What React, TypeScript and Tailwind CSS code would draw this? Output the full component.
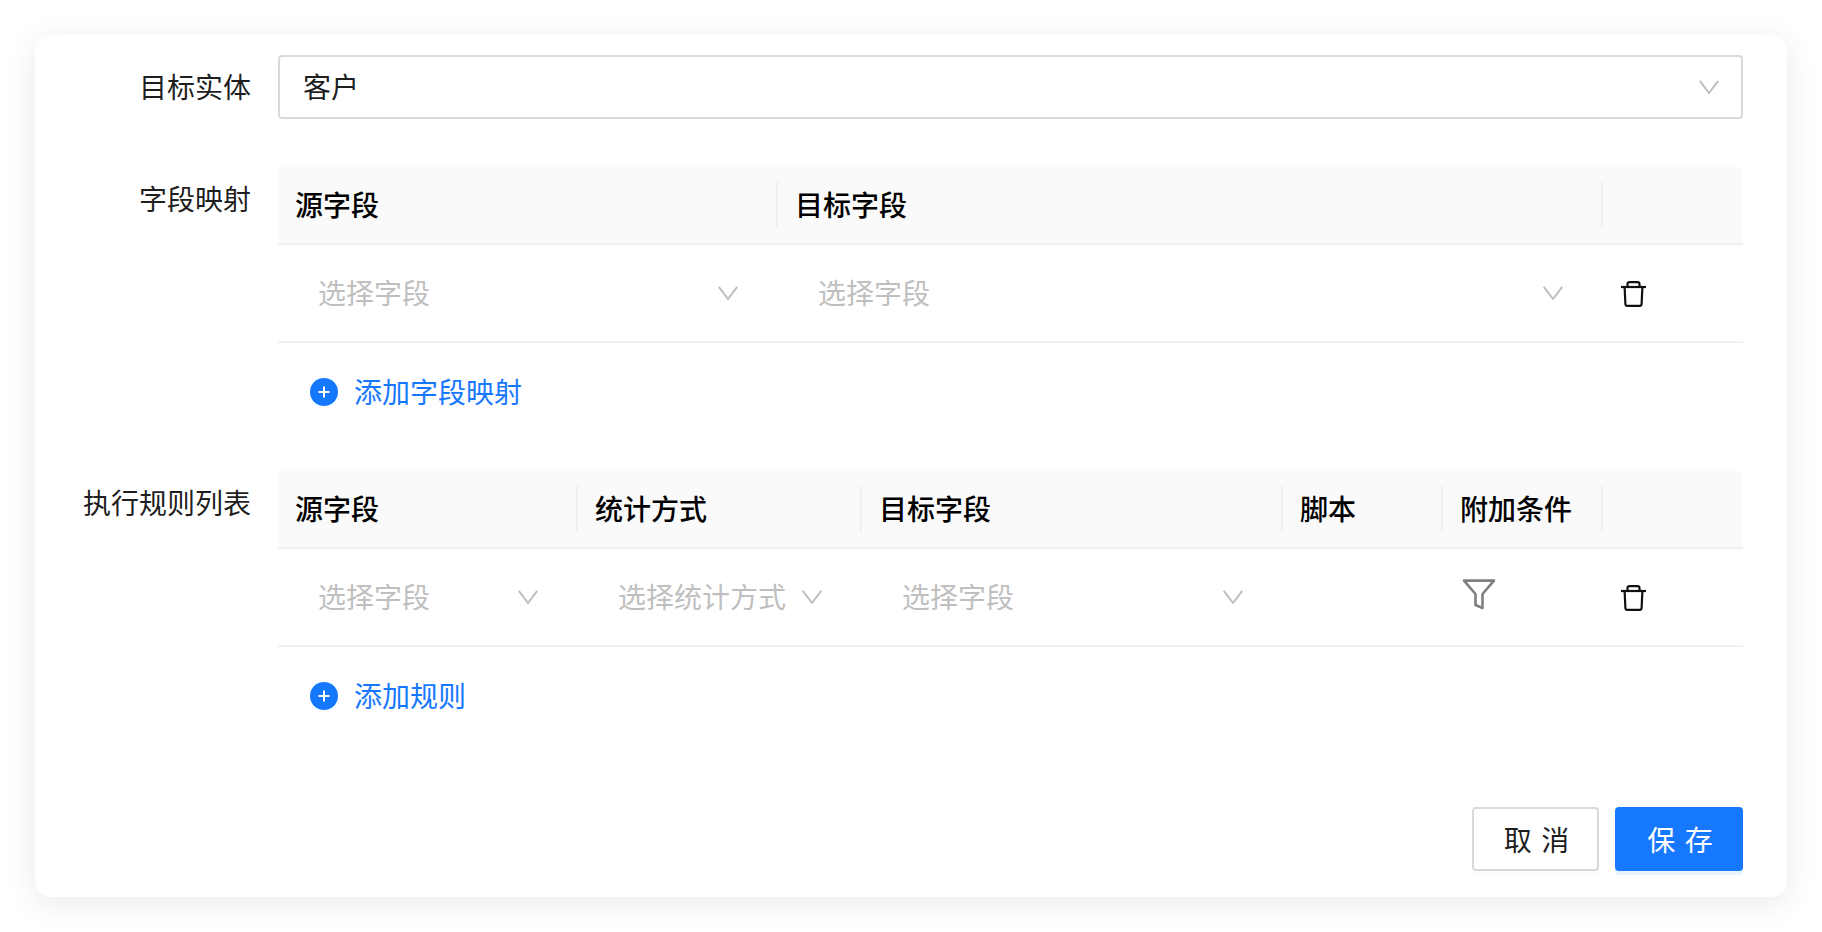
import type { ReactNode } from 'react';

const FONT = "font-['Inter','Noto_Sans_CJK_SC',sans-serif]";

function Chevron() {
  return (
    <svg width="20" height="14" viewBox="0 0 20 14" fill="none" className="shrink-0">
      <path d="M0.8 0.8 L10 13 L19.2 0.8" stroke="#bfbfbf" strokeWidth="2" />
    </svg>
  );
}

function TrashIcon() {
  return (
    <svg width="25" height="26" viewBox="0 0 25 26" fill="none" stroke="#111" strokeWidth="2.2">
      <path d="M0 6 H25" />
      <path d="M6.5 6 V3 Q6.5 1.2 8.5 1.2 H16.5 Q18.5 1.2 18.5 3 V6" />
      <path d="M3.6 6 L4.4 23 Q4.5 24.8 6.3 24.8 H18.7 Q20.5 24.8 20.6 23 L21.4 6" />
    </svg>
  );
}

function FilterIcon() {
  return (
    <svg width="34" height="31" viewBox="0 0 34 31" fill="none" stroke="#7f7f7f" strokeWidth="2.6" strokeLinejoin="round" className="-mt-[6px]">
      <path d="M2 1.6 H32 L20.5 15 V29 L13.5 26 V15 Z" />
    </svg>
  );
}

function AddButton({ label }: { label: string }) {
  return (
    <div className="flex h-[98px] items-center pl-[32px] text-[28px] text-[#1677ff]">
      <svg width="28" height="28" viewBox="0 0 28 28" className="mr-[16px] shrink-0">
        <circle cx="14" cy="14" r="14" fill="#1677ff" />
        <path d="M8.5 14 H19.5 M14 8.5 V19.5" stroke="#fff" strokeWidth="2" />
      </svg>
      <span className="pt-[2px]">{label}</span>
    </div>
  );
}

function SelectCell({ text }: { text: string }) {
  return (
    <div className="flex h-full items-center justify-between pl-[40px] pr-[40px] text-[28px] text-[#bfbfbf]">
      <span className="whitespace-nowrap pt-[2px]">{text}</span>
      <Chevron />
    </div>
  );
}

function FormRow({ label, children }: { label: string; children: ReactNode }) {
  return (
    <div className="flex">
      <div className="flex h-[64px] w-[216px] shrink-0 items-center justify-end pt-[2px] text-[28px] text-black/90">{label}</div>
      <div className="ml-[27px] min-w-0 flex-1">{children}</div>
    </div>
  );
}

type Col = { title: string; width: string; body?: ReactNode };

function RuleTable({ cols }: { cols: Col[] }) {
  return (
    <div>
      <div className="flex h-[78px] rounded-t-[4px] border-b-2 border-[#f0f0f0] bg-[#fafafa]">
        {cols.map((col, i) => (
          <div key={i} className={`relative flex h-full items-center pl-[17px] pt-[2px] text-[28px] font-medium text-black ${col.width}`}>
            {col.title}
            {i < cols.length - 1 && (
              <span className="absolute right-0 top-[15px] h-[46px] w-[2px] bg-[#f0f0f0]" />
            )}
          </div>
        ))}
      </div>
      <div className="flex h-[98px] border-b-2 border-[#f0f0f0]">
        {cols.map((col, i) => (
          <div key={i} className={`h-full ${col.width}`}>{col.body}</div>
        ))}
      </div>
    </div>
  );
}

function DeleteCell() {
  return (
    <div className="flex h-full items-center pl-[18px] pt-[2px]">
      <TrashIcon />
    </div>
  );
}

export default function App() {
  return (
    <div className={`min-h-[932px] bg-white p-[35px] ${FONT}`}>
      <div className="h-[862px] rounded-[16px] bg-white pb-[26px] pl-0 pr-[44px] pt-[20px] shadow-[0_6px_32px_rgba(0,0,0,0.09)]">
        <FormRow label="目标实体">
          <div className="flex h-[64px] items-center justify-between rounded-[4px] border-2 border-[#d9d9d9] pl-[23px] pr-[22px] text-[28px] text-black/90">
            <span className="pt-[2px]">客户</span>
            <Chevron />
          </div>
        </FormRow>

        <div className="mt-[48px]">
          <FormRow label="字段映射">
            <RuleTable
              cols={[
                { title: '源字段', width: 'w-[500px]', body: <SelectCell text="选择字段" /> },
                { title: '目标字段', width: 'w-[825px]', body: <SelectCell text="选择字段" /> },
                { title: '', width: 'w-[140px]', body: <DeleteCell /> },
              ]}
            />
            <AddButton label="添加字段映射" />
          </FormRow>
        </div>

        <div className="mt-[30px]">
          <FormRow label="执行规则列表">
            <RuleTable
              cols={[
                { title: '源字段', width: 'w-[300px]', body: <SelectCell text="选择字段" /> },
                { title: '统计方式', width: 'w-[284px]', body: <SelectCell text="选择统计方式" /> },
                { title: '目标字段', width: 'w-[421px]', body: <SelectCell text="选择字段" /> },
                { title: '脚本', width: 'w-[160px]' },
                {
                  title: '附加条件',
                  width: 'w-[160px]',
                  body: (
                    <div className="flex h-full items-center pl-[19px]">
                      <FilterIcon />
                    </div>
                  ),
                },
                { title: '', width: 'w-[140px]', body: <DeleteCell /> },
              ]}
            />
            <AddButton label="添加规则" />
          </FormRow>
        </div>

        <div className="mt-[62px] flex justify-end gap-[16px]">
          <button className="flex h-[64px] w-[127px] items-center justify-center rounded-[4px] border-2 border-[#d9d9d9] bg-white pl-[2px] pt-[4px] text-[28px] tracking-[0.34em] text-black/90 shadow-[0_4px_0_rgba(0,0,0,0.015)]">
            <span className="-mr-[0.34em]">取消</span>
          </button>
          <button className="flex h-[64px] w-[128px] items-center justify-center rounded-[4px] bg-[#1677ff] pl-[2px] pt-[4px] text-[28px] tracking-[0.34em] text-white shadow-[0_4px_0_rgba(5,145,255,0.1)]">
            <span className="-mr-[0.34em]">保存</span>
          </button>
        </div>
      </div>
    </div>
  );
}
